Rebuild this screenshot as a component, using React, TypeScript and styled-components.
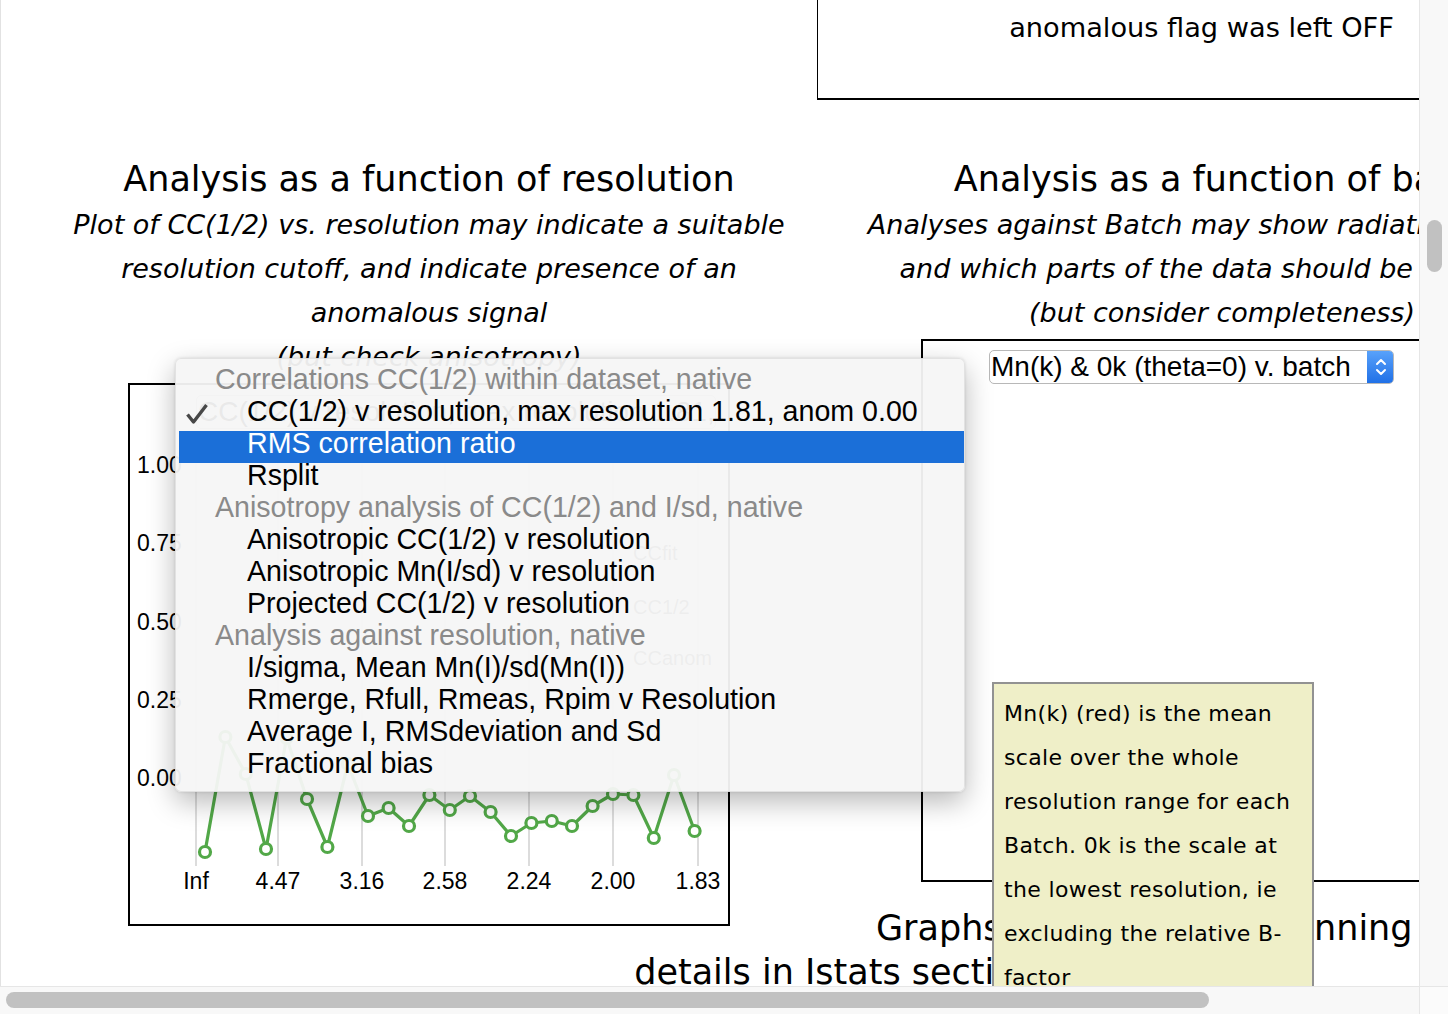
import React from "react";
import styled, { createGlobalStyle } from "styled-components";

const GlobalStyle = createGlobalStyle`
  html, body {
    margin: 0;
    padding: 0;
    background: #ffffff;
    overflow: hidden;
  }
  body {
    font-family: "DejaVu Sans", Verdana, sans-serif;
    color: #000;
  }
`;

const Window = styled.div`
  width: 1448px;
  height: 1014px;
  display: grid;
  grid-template-columns: 1419px 29px;
  grid-template-rows: 986px 28px;
  overflow: hidden;
`;

const Viewport = styled.div`
  position: relative;
  overflow: hidden;
  box-shadow: inset 1px 0 0 #e2e2e2;
`;

const Page = styled.div`
  position: relative;
  width: 1672px;
`;

const TopRow = styled.div`
  display: grid;
  grid-template-columns: 817px 768px;
`;

const FlagNote = styled.div`
  grid-column: 2;
  height: 100px;
  box-sizing: border-box;
  border-left: 1px solid #000;
  border-bottom: 2px solid #000;
  padding-top: 6px;
  font-size: 27.2px;
  line-height: 44px;
  text-align: center;
`;

const Column = styled.section<{ $width: number; $after: number; $shift?: number }>`
  float: left;
  width: ${(p) => p.$width}px;
  margin-left: ${(p) => p.$shift ?? 0}px;
  padding-top: 59px;
  margin-bottom: ${(p) => p.$after}px;
  text-align: center;
`;

const Title = styled.h2`
  margin: 0 0 4px;
  font-size: 35px;
  font-weight: normal;
  line-height: 40px;
  white-space: nowrap;
`;

const Blurb = styled.p`
  margin: 0;
  font-size: 27px;
  font-style: italic;
  line-height: 44px;
  white-space: nowrap;
`;

const Frame = styled.div`
  width: 602px;
  height: 543px;
  box-sizing: border-box;
  margin: 4px auto 0;
  border: 2px solid #000;
  display: flex;
  flex-direction: column;
  overflow: hidden;
`;

const PickerRow = styled.div<{ $top: number; $left: number }>`
  display: flex;
  padding: ${(p) => p.$top}px 0 0 ${(p) => p.$left}px;
  height: ${(p) => 45 - p.$top}px;
  flex-shrink: 0;
`;

const Picker = styled.div<{ $width: number }>`
  width: ${(p) => p.$width}px;
  height: 34px;
  box-sizing: border-box;
  display: flex;
  align-items: stretch;
  border: 1px solid #b8b8b8;
  border-radius: 5px;
  background: #fff;
  font-family: "Liberation Sans", Arial, sans-serif;
  font-size: 28px;
  line-height: 31px;
  text-align: left;
  white-space: nowrap;
  overflow: hidden;
`;

const PickerText = styled.span`
  flex: 1;
  padding-left: 1px;
  overflow: hidden;
`;

const Stepper = styled.span`
  width: 27px;
  margin: -1px -1px -1px 0;
  border-radius: 0 5px 5px 0;
  background: linear-gradient(#5aa3fb, #1f6fe6);
  display: flex;
  align-items: center;
  justify-content: center;
`;

const Closing = styled.p`
  margin: 0;
  font-size: 35px;
  line-height: 44px;
  text-align: center;
`;

const Menu = styled.div`
  position: absolute;
  left: 175px;
  top: 358px;
  width: 790px;
  box-sizing: border-box;
  padding: 8px 0;
  background: rgba(246, 246, 246, 0.95);
  border: 1px solid rgba(0, 0, 0, 0.08);
  border-radius: 6px;
  box-shadow: 0 10px 28px rgba(0, 0, 0, 0.28), 0 0 3px rgba(0, 0, 0, 0.12);
  font-family: "Liberation Sans", Arial, sans-serif;
  font-size: 28.6px;
  z-index: 5;
`;

const MenuRow = styled.div<{ $group?: boolean; $active?: boolean }>`
  position: relative;
  height: 32px;
  line-height: 25px;
  white-space: nowrap;
  padding-left: ${(p) => (p.$group ? 39 : p.$active ? 68 : 71)}px;
  margin-left: ${(p) => (p.$active ? 3 : 0)}px;
  color: ${(p) => (p.$group ? "#8a8a8a" : p.$active ? "#fff" : "#000")};
  background: ${(p) => (p.$active ? "#1b6fd8" : "transparent")};
`;

const Check = styled.svg`
  position: absolute;
  left: 9px;
  top: 4px;
`;

const Tip = styled.div`
  position: absolute;
  left: 992px;
  top: 682px;
  width: 322px;
  height: 420px;
  box-sizing: border-box;
  padding: 8px 10px 0 10px;
  background: #efefc8;
  border: 2px solid #929292;
  font-size: 22px;
  letter-spacing: 0.35px;
  line-height: 44px;
  z-index: 6;
`;

const VScroll = styled.div`
  background: #f8f8f8;
  border-left: 1px solid #e6e6e6;
  padding: 220px 0 0 7px;
`;

const HScroll = styled.div`
  background: #f8f8f8;
  border-top: 1px solid #e6e6e6;
  padding: 5px 0 0 6px;
`;

const Corner = styled.div`
  background: #fbfbfb;
  border-left: 1px solid #e6e6e6;
  border-top: 1px solid #e6e6e6;
`;

const Thumb = styled.div<{ $w: number; $h: number }>`
  width: ${(p) => p.$w}px;
  height: ${(p) => p.$h}px;
  border-radius: 8px;
  background: #c1c1c1;
`;

type Entry = { text: string; group?: boolean; checked?: boolean; active?: boolean };

const entries: Entry[] = [
  { text: "Correlations CC(1/2) within dataset, native", group: true },
  { text: "CC(1/2) v resolution, max resolution 1.81, anom 0.00", checked: true },
  { text: "RMS correlation ratio", active: true },
  { text: "Rsplit" },
  { text: "Anisotropy analysis of CC(1/2) and I/sd, native", group: true },
  { text: "Anisotropic CC(1/2) v resolution" },
  { text: "Anisotropic Mn(I/sd) v resolution" },
  { text: "Projected CC(1/2) v resolution" },
  { text: "Analysis against resolution, native", group: true },
  { text: "I/sigma, Mean Mn(I)/sd(Mn(I))" },
  { text: "Rmerge, Rfull, Rmeas, Rpim v Resolution" },
  { text: "Average I, RMSdeviation and Sd" },
  { text: "Fractional bias" },
];

const points: [number, number][] = [
  [205, 852], [225.4, 737], [245.8, 774], [266, 849], [286.6, 738],
  [307, 799], [327.4, 847], [347.8, 764], [368, 816], [388.6, 808],
  [409, 826], [429.4, 795], [449.8, 810], [470, 796], [490.6, 812],
  [511, 836], [531.4, 823], [551.8, 821], [572, 826], [592.6, 806],
  [613, 794], [633.4, 795], [653.8, 838], [674, 775], [694.6, 831],
];

const yTicks = [
  { label: "1.00", y: 465 },
  { label: "0.75", y: 543 },
  { label: "0.50", y: 622 },
  { label: "0.25", y: 700 },
  { label: "0.00", y: 778 },
];

const xTicks = [
  { label: "Inf", x: 196 },
  { label: "4.47", x: 278 },
  { label: "3.16", x: 362 },
  { label: "2.58", x: 445 },
  { label: "2.24", x: 529 },
  { label: "2.00", x: 613 },
  { label: "1.83", x: 698 },
];

const green = "#52a848";

function CCChart() {
  // viewBox uses page coordinates so the numbers read straight off the screenshot
  return (
    <svg width="598" height="494" viewBox="130 430 598 494" fontFamily="Liberation Sans, Arial, sans-serif">
      {yTicks.map((t) => (
        <line key={t.label} x1={190} x2={705} y1={t.y} y2={t.y} stroke="#e8e8e8" strokeWidth={1.5} />
      ))}
      {xTicks.map((t) => (
        <line key={t.label} x1={t.x} x2={t.x} y1={440} y2={866} stroke="#dcdcdc" strokeWidth={2} />
      ))}
      {yTicks.map((t) => (
        <text key={t.label} x={137} y={t.y + 8} fontSize={23}>
          {t.label}
        </text>
      ))}
      {xTicks.map((t) => (
        <text key={t.label} x={t.x} y={889} fontSize={23} textAnchor="middle">
          {t.label}
        </text>
      ))}
      <text x={633} y={560} fontSize={20} fill="#555">CCfit</text>
      <text x={633} y={614} fontSize={20} fill="#555">CC1/2</text>
      <text x={633} y={665} fontSize={20} fill="#555">CCanom</text>
      <polyline
        points={points.map((p) => p.join(",")).join(" ")}
        fill="none"
        stroke={green}
        strokeWidth={3.2}
        strokeLinejoin="round"
      />
      {points.map(([x, y]) => (
        <circle key={x} cx={x} cy={y} r={5.5} fill="#fff" stroke={green} strokeWidth={3.2} />
      ))}
    </svg>
  );
}

function StepperIcon() {
  return (
    <svg width="14" height="24" viewBox="0 0 14 24">
      <path d="M3 9 L7 5 L11 9" fill="none" stroke="#fff" strokeWidth={2} strokeLinecap="round" strokeLinejoin="round" />
      <path d="M3 15 L7 19 L11 15" fill="none" stroke="#fff" strokeWidth={2} strokeLinecap="round" strokeLinejoin="round" />
    </svg>
  );
}

export default function App() {
  return (
    <>
      <GlobalStyle />
      <Window>
        <Viewport>
          <Page>
            <TopRow>
              <FlagNote>anomalous flag was left OFF</FlagNote>
            </TopRow>

            <Column $width={858} $after={20}>
              <Title>Analysis as a function of resolution</Title>
              <Blurb>
                Plot of CC(1/2) vs. resolution may indicate a suitable
                <br />
                resolution cutoff, and indicate presence of an
                <br />
                anomalous signal
                <br />
                (but check anisotropy)
              </Blurb>
              <Frame>
                <PickerRow $top={10} $left={66}>
                  <Picker $width={520}>
                    <PickerText>CC(1/2) v resolution, max resolution 1.81, anom 0.00</PickerText>
                  </Picker>
                </PickerRow>
                <CCChart />
              </Frame>
            </Column>

            <Column $width={722} $after={24} $shift={3}>
              <Title>Analysis as a function of batch</Title>
              <Blurb>
                Analyses against Batch may show radiation damage
                <br />
                and which parts of the data should be excluded
                <br />
                (but consider completeness)
              </Blurb>
              <Frame>
                <PickerRow $top={9} $left={66}>
                  <Picker $width={405}>
                    <PickerText>Mn(k) &amp; 0k (theta=0) v. batch</PickerText>
                    <Stepper>
                      <StepperIcon />
                    </Stepper>
                  </Picker>
                </PickerRow>
              </Frame>
            </Column>

            <Closing>Graphs for the whole scanning experiments, details in Istats section</Closing>

            <Menu>
              {entries.map((e) => (
                <MenuRow key={e.text} $group={e.group} $active={e.active}>
                  {e.checked && (
                    <Check width="24" height="22" viewBox="0 0 24 22">
                      <path d="M2.5 11.5 L8.5 19 L21.5 2" fill="none" stroke="#474747" strokeWidth={3.4} strokeLinejoin="round" />
                    </Check>
                  )}
                  {e.text}
                </MenuRow>
              ))}
            </Menu>

            <Tip>
              Mn(k) (red) is the mean scale over the whole resolution range for each Batch. 0k is the
              scale at the lowest resolution, ie excluding the relative B-factor
            </Tip>
          </Page>
        </Viewport>
        <VScroll>
          <Thumb $w={15} $h={52} />
        </VScroll>
        <HScroll>
          <Thumb $w={1203} $h={16} />
        </HScroll>
        <Corner />
      </Window>
    </>
  );
}
